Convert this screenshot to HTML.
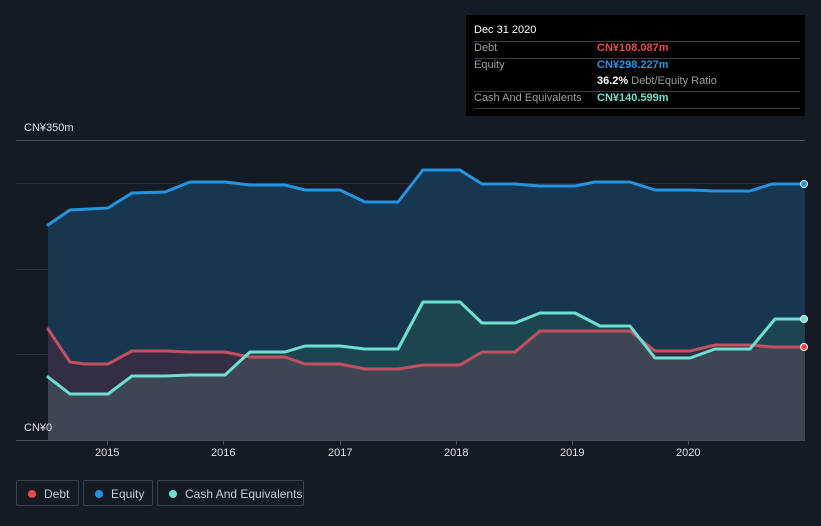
<!DOCTYPE html>
<html><head><meta charset="utf-8"><style>
body{margin:0;width:821px;height:526px;background:#151b24;font-family:"Liberation Sans",sans-serif;overflow:hidden;position:relative}
.t{position:absolute;left:466px;top:15px;width:339px;height:101px;background:#000;color:#fff;font-size:11px}
.r{position:absolute;left:8px;right:5px;border-top:1px solid #3a3d42}
.k{position:absolute;color:#9a9da2;font-size:11px}
.v{position:absolute;left:131px;font-weight:bold;font-size:11px}
.lg{position:absolute;top:480px;height:26px;border:1px solid #3d434c;border-radius:2px;color:#c8ccd2;font-size:12px;line-height:26px;box-sizing:border-box}
.lg i{position:absolute;left:11px;top:9px;width:8px;height:8px;border-radius:50%}
.lg span{position:absolute;left:27px}
.ax{position:absolute;color:#e0e3e8;font-size:11px}
</style></head><body>
<svg width="821" height="526" style="position:absolute;left:0;top:0">
<line x1="16" y1="140.5" x2="805" y2="140.5" stroke="#4a4e55"/>
<line x1="16" y1="183.5" x2="805" y2="183.5" stroke="#2a2f37"/>
<line x1="16" y1="269.5" x2="805" y2="269.5" stroke="#2a2f37"/>
<line x1="16" y1="354.5" x2="805" y2="354.5" stroke="#2a2f37"/>
<polygon fill="#173650" points="48,225 70,210 108,208 132,193 165,192 190,182 225,182 250,185 285,185 305,190 340,190 365,202 398,202 423,170 460,170 482,184 515,184 540,186 575,186 595,182 630,182 655,190 690,190 715,191 750,191 772,184 805,184 805,440 48,440"/>
<polygon fill="#1f4a50" fill-opacity="0.8" points="48,377 70,394 108,394 132,376 165,376 190,375 225,375 250,352 285,352 305,346 340,346 365,349 398,349 423,302 460,302 482,323 515,323 540,313 575,313 600,326 630,326 655,358 690,358 715,349 750,349 775,319 805,319 805,440 48,440"/>
<polygon fill="#4a2a3a" fill-opacity="0.6" points="48,329 70,362 85,364 108,364 132,351 165,351 190,352 225,352 250,357 285,357 305,364 340,364 365,369 398,369 423,365 460,365 482,352 515,352 540,331 630,331 655,351 690,351 715,345 750,345 772,347 805,347 805,440 48,440"/>
<polygon fill="#3d4955" fill-opacity="0.9" points="48,377 70,394 108,394 132,376 165,376 190,375 225,375 250,357 285,357 305,364 340,364 365,369 398,369 423,365 460,365 482,352 515,352 540,331 630,331 655,358 690,358 715,349 750,349 772,347 805,347 805,440 48,440"/>
<g fill="none" stroke-width="3" stroke-linejoin="round" stroke-linecap="round">
<polyline stroke="#2394df" points="48,225 70,210 108,208 132,193 165,192 190,182 225,182 250,185 285,185 305,190 340,190 365,202 398,202 423,170 460,170 482,184 515,184 540,186 575,186 595,182 630,182 655,190 690,190 715,191 750,191 772,184 805,184"/>
<polyline stroke="#c2505e" points="48,329 70,362 85,364 108,364 132,351 165,351 190,352 225,352 250,357 285,357 305,364 340,364 365,369 398,369 423,365 460,365 482,352 515,352 540,331 630,331 655,351 690,351 715,345 750,345 772,347 805,347"/>
<polyline stroke="#6de0d0" points="48,377 70,394 108,394 132,376 165,376 190,375 225,375 250,352 285,352 305,346 340,346 365,349 398,349 423,302 460,302 482,323 515,323 540,313 575,313 600,326 630,326 655,358 690,358 715,349 750,349 775,319 805,319"/>
</g>
<circle cx="804" cy="184" r="3.5" fill="#2394df" stroke="#fff"/>
<circle cx="804" cy="319" r="3.5" fill="#6de0d0" stroke="#fff"/>
<circle cx="804" cy="347" r="3.5" fill="#e84a4a" stroke="#fff"/>
<line x1="16" y1="440.5" x2="805" y2="440.5" stroke="#4a4e55"/>
<g stroke="#4a4e55"><line x1="107.5" y1="440" x2="107.5" y2="445"/><line x1="223.5" y1="440" x2="223.5" y2="445"/><line x1="340.5" y1="440" x2="340.5" y2="445"/><line x1="456.5" y1="440" x2="456.5" y2="445"/><line x1="572.5" y1="440" x2="572.5" y2="445"/><line x1="688.5" y1="440" x2="688.5" y2="445"/></g>
</svg>
<div class="ax" style="left:24px;top:122px">CN¥350m</div>
<div class="ax" style="left:24px;top:422px">CN¥0</div>
<div class="ax" style="left:95px;top:447px">2015</div>
<div class="ax" style="left:211px;top:447px">2016</div>
<div class="ax" style="left:328px;top:447px">2017</div>
<div class="ax" style="left:444px;top:447px">2018</div>
<div class="ax" style="left:560px;top:447px">2019</div>
<div class="ax" style="left:676px;top:447px">2020</div>
<div class="t">
<div style="position:absolute;left:8px;top:9px">Dec 31 2020</div>
<div class="r" style="top:26px"></div>
<div class="k" style="left:8px;top:27px">Debt</div><div class="v" style="top:27px;color:#e84a4a">CN¥108.087m</div>
<div class="r" style="top:43px"></div>
<div class="k" style="left:8px;top:44px">Equity</div><div class="v" style="top:44px;color:#2394df">CN¥298.227m</div>
<div class="v" style="top:60px;color:#fff">36.2% <span style="font-weight:normal;color:#9a9da2">Debt/Equity Ratio</span></div>
<div class="r" style="top:76px"></div>
<div class="k" style="left:8px;top:77px">Cash And Equivalents</div><div class="v" style="top:77px;color:#6de0d0">CN¥140.599m</div>
<div class="r" style="top:93px"></div>
</div>
<div class="lg" style="left:16px;width:63px"><i style="background:#e84a4a"></i><span>Debt</span></div>
<div class="lg" style="left:83px;width:70px"><i style="background:#2394df"></i><span>Equity</span></div>
<div class="lg" style="left:157px;width:147px"><i style="background:#6de0d0"></i><span>Cash And Equivalents</span></div>
</body></html>
